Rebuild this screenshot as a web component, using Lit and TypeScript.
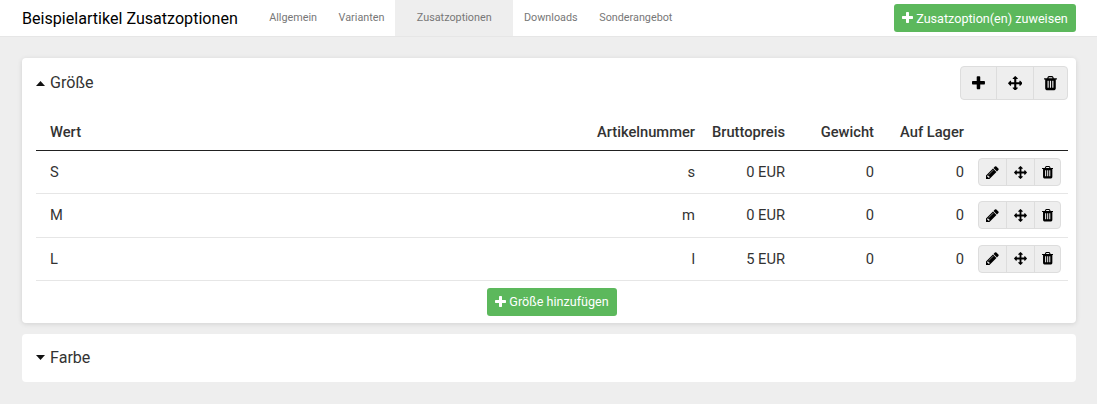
import { LitElement, html, css, svg } from "lit";
import { customElement } from "lit/decorators.js";

const P = {
  plus: { w: 1408, d: "M1408 736v192q0 40-28 68t-68 28h-416v416q0 40-28 68t-68 28h-192q-40 0-68-28t-28-68v-416h-416q-40 0-68-28t-28-68v-192q0-40 28-68t68-28h416v-416q0-40 28-68t68-28h192q40 0 68 28t28 68v416h416q40 0 68 28t28 68z" },
  move: { w: 1792, d: "M1792 896q0 26-19 45l-256 256q-19 19-45 19t-45-19-19-45v-128h-384v384h128q26 0 45 19t19 45-19 45l-256 256q-19 19-45 19t-45-19l-256-256q-19-19-19-45t19-45 45-19h128v-384h-384v128q0 26-19 45t-45 19-45-19l-256-256q-19-19-19-45t19-45l256-256q19-19 45-19t45 19 19 45v128h384v-384h-128q-26 0-45-19t-19-45 19-45l256-256q19-19 45-19t45 19l256 256q19 19 19 45t-19 45-45 19h-128v384h384v-128q0-26 19-45t45-19 45 19l256 256q19 19 19 45z" },
  trash: { w: 1408, d: "M512 1248v-704q0-14-9-23t-23-9h-64q-14 0-23 9t-9 23v704q0 14 9 23t23 9h64q14 0 23-9t9-23zm256 0v-704q0-14-9-23t-23-9h-64q-14 0-23 9t-9 23v704q0 14 9 23t23 9h64q14 0 23-9t9-23zm256 0v-704q0-14-9-23t-23-9h-64q-14 0-23 9t-9 23v704q0 14 9 23t23 9h64q14 0 23-9t9-23zm-544-992h448l-48-117q-7-9-17-11h-317q-10 2-17 11zm928 32v64q0 14-9 23t-23 9h-96v948q0 83-47 143.500t-113 60.500h-832q-66 0-113-58.500t-47-141.500v-952h-96q-14 0-23-9t-9-23v-64q0-14 9-23t23-9h309l70-167q15-37 54-63t79-26h320q40 0 79 26t54 63l70 167h309q14 0 23 9t9 23z" },
  pencil: { w: 1536, d: "M363 1536l91-91-235-235-91 91v107h128v128h107zm523-928q0-22-22-22-10 0-17 7l-542 542q-7 7-7 17 0 22 22 22 10 0 17-7l542-542q7-7 7-17zm-54-192l416 416-832 832h-416v-416zm683 96q0 53-37 90l-166 166-416-416 166-165q36-38 90-38 53 0 91 38l235 234q37 39 37 91z" },
};
type IconName = keyof typeof P;

const icon = (n: IconName, size: number) => html`<svg class="ico" width=${(P[n].w / 1792) * size} height=${size} viewBox="0 0 ${P[n].w} 1792" fill="currentColor">${svg`<path d=${P[n].d}></path>`}</svg>`;

const rows = [
  ["S", "s", "0 EUR", "0", "0"],
  ["M", "m", "0 EUR", "0", "0"],
  ["L", "l", "5 EUR", "0", "0"],
];

@customElement("app-root")
export class AppRoot extends LitElement {
  static styles = css`
    :host { display: block; min-height: 404px; background: #eee; font-family: Roboto, sans-serif; color: #212529; font-size: 14.7px; }
    * { box-sizing: border-box; }
    .top { display: flex; align-items: stretch; height: 37px; padding: 0 21px 0 22px; background: #fff; border-bottom: 1px solid #e6e6e6; }
    .title { font-size: 16.1px; line-height: 37px; color: #000; margin-right: 20.5px; white-space: nowrap; }
    .tab { font-size: 10.8px; line-height: 36px; color: #777; padding: 0 10.8px; white-space: nowrap; }
    .tab.on { background: #eee; padding: 0 21.6px; }
    .btn { display: inline-flex; align-items: center; justify-content: center; gap: 3px; height: 28px; background: #5cb85c; color: #fff; border-radius: 3px; font-size: 12.6px; white-space: nowrap; }
    .assign { width: 182px; margin: 4px 0 0 auto; }
    .add { width: 130px; }
    main { padding: 21px 21px 22px 22px; display: flex; flex-direction: column; gap: 11px; }
    .card { background: #fff; border-radius: 4px; }
    .card.open { box-shadow: 0 1px 5px rgba(0,0,0,.12); padding: 8px 8px 7px 14px; }
    .head { display: flex; align-items: center; gap: 5px; height: 34px; font-size: 16.1px; color: #333; }
    .head > span { position: relative; top: -1px; }
    .caret { flex: none; }
    .group { display: inline-flex; background: #eee; border: 1px solid #ddd; border-radius: 4px; color: #000; }
    .group span { display: flex; align-items: center; justify-content: center; flex: none; border-left: 1px solid #ddd; }
    .group span:first-child { border-left: 0; }
    .group span.bin { padding-top: 2px; }
    .big { margin-left: auto; height: 34px; width: 108px; }
    .big span:nth-child(1) { width: 35px; }
    .big span:nth-child(2) { width: 37px; }
    .big span:nth-child(3) { width: 34px; }
    .small { height: 28px; width: 83px; }
    .small span:nth-child(1) { width: 27px; }
    .small span:nth-child(2) { width: 28px; }
    .small span:nth-child(3) { width: 26px; }
    .row { display: grid; grid-template-columns: 1fr 100px 90px 89px 90px 97px; align-items: center; padding: 0 7px 0 14px; }
    .row > :not(:first-child) { text-align: right; }
    .row > .acts { display: flex; justify-content: flex-end; }
    .th { height: 51px; padding-top: 14px; border-bottom: 1px solid #212121; font-weight: 500; color: #333; font-size: 14.7px; }
    .tr { height: 43.3px; border-bottom: 1px solid #e6e6e6; color: #333; }
    .foot { display: flex; justify-content: center; padding-top: 7px; }
    .farbe { height: 48px; padding-left: 14px; }
    .farbe .head { height: 48px; }
    .farbe .head > span { top: 0; }
    .ico { display: block; }
  `;

  render() {
    return html`
      <header class="top">
        <div class="title">Beispielartikel Zusatzoptionen</div>
        <div class="tab">Allgemein</div>
        <div class="tab">Varianten</div>
        <div class="tab on">Zusatzoptionen</div>
        <div class="tab">Downloads</div>
        <div class="tab">Sonderangebot</div>
        <div class="btn assign">${icon("plus", 14)}Zusatzoption(en) zuweisen</div>
      </header>
      <main>
        <section class="card open">
          <div class="head">
            <svg class="caret" width="9" height="5" viewBox="0 0 9 5" fill="#111"><path d="M4.5 0 9 5H0z"></path></svg>
            <span>Größe</span>
            <div class="group big"><span>${icon("plus", 16.5)}</span><span>${icon("move", 14.5)}</span><span class="bin">${icon("trash", 16.5)}</span></div>
          </div>
          <div class="row th"><div>Wert</div><div>Artikelnummer</div><div>Bruttopreis</div><div>Gewicht</div><div>Auf Lager</div><div></div></div>
          ${rows.map((r) => html`
            <div class="row tr">
              ${r.map((c) => html`<div>${c}</div>`)}
              <div class="acts"><div class="group small"><span>${icon("pencil", 15)}</span><span>${icon("move", 13)}</span><span class="bin">${icon("trash", 14.5)}</span></div></div>
            </div>`)}
          <div class="foot"><div class="btn add">${icon("plus", 14)}Größe hinzufügen</div></div>
        </section>
        <section class="card farbe">
          <div class="head">
            <svg class="caret" width="9" height="5" viewBox="0 0 9 5" fill="#111"><path d="M0 0h9L4.500 5z"></path></svg>
            <span>Farbe</span>
          </div>
        </section>
      </main>
    `;
  }
}
